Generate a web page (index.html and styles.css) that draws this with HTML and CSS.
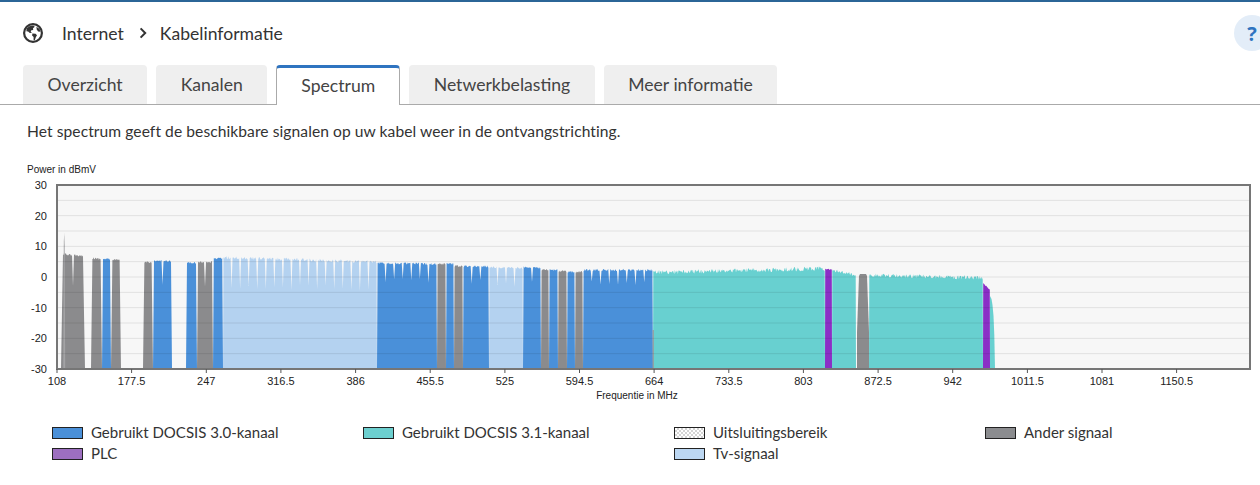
FILE: index.html
```html
<!DOCTYPE html>
<html lang="nl">
<head>
<meta charset="utf-8">
<title>Kabelinformatie – Spectrum</title>
<link rel="stylesheet" href="styles.css">
</head>
<body>
<header class="crumbs">
  <svg class="globe" viewBox="0 0 20 20" width="20" height="20" aria-hidden="true">
    <circle cx="10" cy="10" r="8.9" fill="none" stroke="#333" stroke-width="2.2"/>
    <path fill="#333" d="M3.6 5.6 L6.4 3.2 L10.2 2.4 L11.8 3.8 L10 5.2 L10.2 6.9 L8.3 7.3 L7.7 8.9 L9.2 9.7 L6.8 10 L5.1 8.5 L3.4 8.3 Z"/>
    <path fill="#333" d="M9.4 10.4 L12.6 10.7 L14 12.2 L12.8 14.3 L11.8 17.3 L10.6 17.1 L10.6 14.1 L9.1 12.5 Z"/>
    <path fill="#333" d="M13.4 3.8 L16.6 5.9 L17.3 8.8 L15.1 8.4 L13.8 6.4 Z"/>
  </svg>
  <span class="crumb">Internet</span>
  <svg class="chev" viewBox="0 0 8 12" width="8" height="12" aria-hidden="true">
    <path d="M1.6 1.4 L6.2 6 L1.6 10.6" fill="none" stroke="#333" stroke-width="2"/>
  </svg>
  <span class="crumb">Kabelinformatie</span>
  <button class="help" type="button">?</button>
</header>

<nav class="tabs">
  <a class="tab">Overzicht</a>
  <a class="tab">Kanalen</a>
  <a class="tab active">Spectrum</a>
  <a class="tab">Netwerkbelasting</a>
  <a class="tab">Meer informatie</a>
</nav>

<main class="content">
  <p class="intro">Het spectrum geeft de beschikbare signalen op uw kabel weer in de ontvangstrichting.</p>

  <svg class="chart" id="spectrum" viewBox="0 160 1260 245" width="1260" height="245">
    <text class="axis-title" x="27" y="173">Power in dBmV</text>
    <rect x="57" y="185" width="1193" height="184" fill="#f7f7f7"/>
    <g id="fills"></g>
    <polygon fill="#8b8b8d" points="857,369 857,332 859,276 860,274 866,274 867,276 869,332 869,369"/>
    <polygon fill="#68d0d0" points="990,369 990,296 991.5,299 992.5,305 993.5,316 994.3,335 995,369"/>
    <polygon fill="#a3a3a5" points="63.3,369 63.8,242 64.2,233 64.7,246 65.2,369"/>
    <rect x="652.6" y="330" width="1.2" height="39" fill="#9a9a9a"/>
    <g class="grid" id="grid"></g>
    <rect x="57" y="185" width="1193" height="184" fill="none" stroke="#767676" stroke-width="2"/>
    <g class="ylabels" id="ylabels"></g>
    <g class="xlabels" id="xlabels"></g>
    <text class="axis-title" x="637" y="399" text-anchor="middle">Frequentie in MHz</text>
  </svg>

  <ul class="legend">
    <li><span class="sw sw-d30"></span>Gebruikt DOCSIS 3.0-kanaal</li>
    <li><span class="sw sw-d31"></span>Gebruikt DOCSIS 3.1-kanaal</li>
    <li><span class="sw sw-excl"></span>Uitsluitingsbereik</li>
    <li><span class="sw sw-oth"></span>Ander signaal</li>
    <li><span class="sw sw-plc"></span>PLC</li>
    <li class="col3"><span class="sw sw-tv"></span>Tv-signaal</li>
  </ul>
</main>
<script src="chart.js"></script>
</body>
</html>
```

FILE: styles.css
```css
* { box-sizing: border-box; }
html, body { margin: 0; padding: 0; }
body {
  width: 1260px;
  height: 485px;
  overflow: hidden;
  background: #fff;
  color: #333;
  font-family: Lato, "Open Sans", sans-serif;
  border-top: 2px solid #2b6597;
}

.crumbs {
  display: flex;
  align-items: center;
  height: 62px;
  padding-left: 23px;
  font-size: 17.6px;
}
.globe { margin-right: 19px; flex: none; }
.crumb { color: #333; }
.chev { margin: 0 13px 0 15px; flex: none; }
.help {
  margin-left: auto;
  margin-right: -10px;
  width: 36px;
  height: 36px;
  border: 0;
  border-radius: 50%;
  background: #e3edf8;
  color: #2f74c0;
  font-family: "Open Sans", sans-serif;
  font-weight: 700;
  font-size: 20px;
  padding: 0;
}

.tabs {
  display: flex;
  align-items: flex-end;
  gap: 9px;
  height: 41px;
  padding-left: 23px;
  border-bottom: 1px solid #aaa;
}
.tab {
  display: block;
  height: 39px;
  line-height: 39px;
  padding: 0 24.5px;
  background: #efefef;
  border-radius: 4px 4px 0 0;
  color: #444;
  font-size: 17.6px;
}
.tab.active {
  height: 40px;
  margin-bottom: -1px;
  line-height: 36px;
  background: #fff;
  border: 1px solid #aaa;
  border-top: 3px solid #2f74c0;
  border-bottom: 0;
  padding: 0 24px;
}

.content { padding: 0; }
.intro {
  margin: 16px 0 0;
  padding-left: 27px;
  font-size: 15.6px;
  letter-spacing: 0.07px;
  line-height: 20px;
  color: #333;
}

.chart {
  display: block;
  margin-top: 19px;
  font-family: "Liberation Sans", Arial, sans-serif;
}
.axis-title { font-size: 10px; fill: #222; }
.ylabels text, .xlabels text { font-size: 11px; fill: #222; }

.legend {
  list-style: none;
  margin: 17px 0 0;
  padding: 0 0 0 52px;
  display: grid;
  grid-template-columns: repeat(4, 311px);
  font-size: 15px;
  line-height: 21px;
  color: #333;
}
.legend li { display: flex; align-items: center; }
.legend .col3 { grid-column: 3; }
.sw {
  width: 31px;
  height: 12px;
  border: 1px solid #222;
  margin-right: 8px;
  flex: none;
}
.sw-d30 { background: #4a90d9; }
.sw-d31 { background: #6ccfcf; }
.sw-excl { background: repeating-conic-gradient(#d4d4d4 0 25%, #fff 0 50%) 0 0 / 4px 4px; }
.sw-oth { background: #8b8c8f; }
.sw-plc { background: #9d6fc0; }
.sw-tv { background: #bcd7f2; }
```

FILE: chart.js
```js
(function () {
  var NS = 'http://www.w3.org/2000/svg';
  var BOTTOM = 369, TOP = 185, LEFT = 57;
  var COLORS = { d30: '#4a90d9', tv: '#b4d2f0', oth: '#8b8b8d', d31: '#68d0d0', plc: '#8a2fc6' };
  var seed = 12345;
  function rnd() { seed = (seed * 16807) % 2147483647; return (seed - 1) / 2147483646; }
  function el(name, attrs, text) {
    var e = document.createElementNS(NS, name);
    for (var k in attrs) e.setAttribute(k, attrs[k]);
    if (text !== undefined) e.textContent = text;
    return e;
  }

  // x0, x1, type, top at start, top at end, channels, notch depth, noise, edge inset
  var blocks = [
    [61, 85, 'oth', 254, 256, 2, 287, 1.0, 2],
    [91, 102, 'oth', 258, 259, 1, 0, 1, 1.4],
    [102, 111, 'd30', 259, 259, 1, 0, 1, 1],
    [111, 121, 'oth', 260, 260, 1, 0, 1, 1.4],
    [143, 153, 'oth', 262, 262, 1, 0, 1, 1.4],
    [153, 172, 'd30', 261, 261, 2, 285, 1, 1],
    [186, 197, 'd30', 263, 263, 1, 0, 1, 1],
    [197, 213, 'oth', 262, 262, 2, 284, 1, 1],
    [213, 223, 'd30', 258.5, 258.5, 1, 0, 1, 0.8],
    [223, 377, 'tv', 257.5, 262, 18, 288, 1.6, 0.5],
    [377, 437, 'd30', 263, 264, 7, 280, 1.2, 0.6],
    [437, 446, 'oth', 264, 264, 1, 0, 1, 0.6],
    [446, 454, 'd30', 263.5, 263.5, 1, 0, 1, 0.6],
    [454, 463, 'oth', 266, 266, 1, 0, 1, 0.6],
    [463, 489, 'd30', 266, 266.5, 3, 282, 1, 0.6],
    [489, 523, 'tv', 267, 268, 4, 284, 1, 0.5],
    [523, 541, 'd30', 267, 268, 2, 282, 1, 0.6],
    [541, 549, 'oth', 270, 270, 1, 0, 1, 0.6],
    [549, 558, 'd30', 270, 270, 1, 0, 1, 0.6],
    [558, 567, 'oth', 271, 271, 1, 0, 1, 0.6],
    [567, 575, 'd30', 272, 272, 1, 0, 1, 0.6],
    [575, 583, 'oth', 272, 272, 1, 0, 1, 0.6],
    [583, 653, 'd30', 270, 270, 8, 284, 1.2, 0.6],
    [653, 825, 'd31', 272.5, 268.5, 1, 0, 2.2, 0.3],
    [825, 832, 'plc', 269, 269.5, 1, 0, 0.5, 0.2],
    [832, 856, 'd31', 270, 275, 1, 0, 1.6, 0.3],
    [869, 983, 'd31', 275, 278, 1, 0, 2, 0.3],
    [983, 990, 'plc', 283, 290, 1, 0, 0.5, 0.2]
  ];

  var fills = document.getElementById('fills');
  blocks.forEach(function (b) {
    var x0 = b[0], x1 = b[1], n = b[5], w = (x1 - x0) / n, inset = b[8];
    var pts = [[x0, BOTTOM]];
    for (var i = 0; i < n; i++) {
      var a = x0 + i * w, c = a + w;
      var li = (i === 0) ? inset : 1;
      var ri = (i === n - 1) ? inset : 1;
      var steps = Math.max(3, Math.round((w - li - ri) / 0.6));
      for (var s = 0; s <= steps; s++) {
        var x = a + li + (w - li - ri) * s / steps;
        var frac = (x - x0) / (x1 - x0);
        var t = b[3] + (b[4] - b[3]) * frac + (rnd() - 0.5) * 2 * b[7];
        if (n > 1 || b[2] === 'oth') {
          var local = (x - a) / w;
          if (local < 0.12) t += (0.12 - local) * 8;
          if (local > 0.88) t += (local - 0.88) * 10;
        }
        pts.push([x, t]);
      }
      if (i < n - 1) pts.push([c, b[6] + (rnd() - 0.5) * 6]);
    }
    pts.push([x1, BOTTOM]);
    var d = pts.map(function (p) { return p[0].toFixed(2) + ',' + p[1].toFixed(2); }).join(' ');
    fills.appendChild(el('polygon', { points: d, fill: COLORS[b[2]] }));
  });

  var grid = document.getElementById('grid');
  var step = (BOTTOM - TOP) / 12;
  for (var k = 1; k < 12; k++) {
    var y = TOP + k * step;
    grid.appendChild(el('line', { x1: LEFT, x2: 1250, y1: y.toFixed(2), y2: y.toFixed(2), stroke: 'rgba(0,0,0,0.09)', 'stroke-width': 1 }));
  }

  var yl = document.getElementById('ylabels');
  for (var v = 30; v >= -30; v -= 10) {
    var yy = TOP + (30 - v) / 60 * (BOTTOM - TOP);
    yl.appendChild(el('text', { x: 47, y: (yy + 4).toFixed(1), 'text-anchor': 'end' }, String(v)));
  }

  var xl = document.getElementById('xlabels');
  var ticks = [108, 177.5, 247, 316.5, 386, 455.5, 525, 594.5, 664, 733.5, 803, 872.5, 942, 1011.5, 1081, 1150.5];
  ticks.forEach(function (f) {
    var x = LEFT + (f - 108) * 1.074;
    xl.appendChild(el('line', { x1: x.toFixed(1), x2: x.toFixed(1), y1: BOTTOM, y2: BOTTOM + 4, stroke: '#555', 'stroke-width': 1 }));
    xl.appendChild(el('text', { x: x.toFixed(1), y: 385, 'text-anchor': 'middle' }, String(f)));
  });
})();
```
